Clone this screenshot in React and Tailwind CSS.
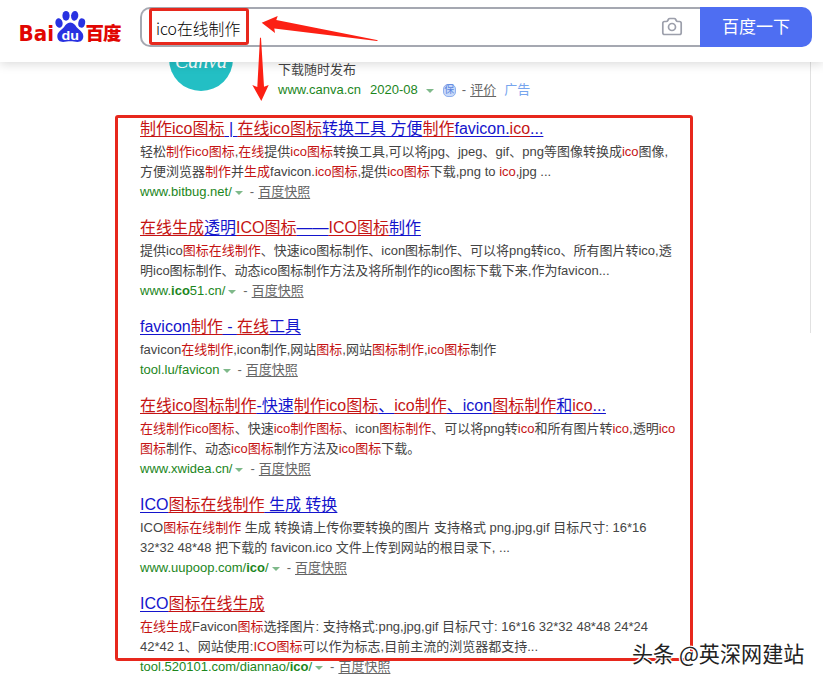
import React from "react";

// text inside [ ] is a matched keyword
const results = [
  {
    title: "[制作ico图标] | [在线ico图标]转换工具 方便[制作]favicon.[ico]...",
    lines: [
      "轻松[制作ico图标],[在线]提供[ico图标]转换工具,可以将jpg、jpeg、gif、png等图像转换成[ico]图像,",
      "方便浏览器[制作]并[生成]favicon.[ico图标],提供[ico图标]下载,png to [ico],jpg ...",
    ],
    url: "www.bitbug.net/",
  },
  {
    title: "[在线生成]透明[ICO图标]——[ICO图标]制作",
    lines: [
      "提供ico[图标在线制作]、快速ico图标制作、icon图标制作、可以将png转ico、所有图片转ico,透",
      "明ico图标制作、动态ico图标制作方法及将所制作的ico图标下载下来,作为favicon...",
    ],
    url: "www.[ico]51.cn/",
  },
  {
    title: "favicon[制作] - [在线]工具",
    lines: ["favicon[在线制作],icon制作,网站[图标],网站[图标制作],[ico图标]制作"],
    url: "tool.lu/favicon",
  },
  {
    title: "[在线ico图标制作]-快速[制作ico图标]、[ico制作]、icon[图标制作]和[ico]...",
    lines: [
      "[在线制作ico图标]、快速[ico制作图标]、icon[图标制作]、可以将png转[ico]和所有图片转[ico],透明[ico]",
      "[图标]制作、动态[ico图标]制作方法及[ico图标]下载。",
    ],
    url: "www.xwidea.cn/",
  },
  {
    title: "ICO[图标在线制作] 生成 转换",
    lines: [
      "ICO[图标在线制作] 生成 转换请上传你要转换的图片 支持格式 png,jpg,gif 目标尺寸: 16*16",
      "32*32 48*48 把下载的 favicon.ico 文件上传到网站的根目录下, ...",
    ],
    url: "www.uupoop.com/[ico]/",
  },
  {
    title: "ICO[图标在线生成]",
    lines: [
      "[在线生成]Favicon[图标]选择图片: 支持格式:png,jpg,gif 目标尺寸: 16*16 32*32 48*48 24*24",
      "42*42 1、网站使用:[ICO图标]可以作为标志,目前主流的浏览器都支持...",
    ],
    url: "tool.520101.com/diannao/[ico]/",
  },
];

function Marked({ text, className }) {
  return text.split(/[[\]]/).map((part, i) =>
    i % 2 ? (
      <em key={i} className={className}>
        {part}
      </em>
    ) : (
      <span key={i}>{part}</span>
    )
  );
}

function Caret() {
  return <span className="mt-px border-x-4 border-t-4 border-x-transparent border-t-[#7fb98a]" />;
}

function Result({ item }) {
  return (
    <div className="mb-[13px] whitespace-nowrap">
      <h3 className="h-[26px] text-base leading-[26px] text-[#1414cc]">
        <a className="underline decoration-1 underline-offset-2">
          <Marked text={item.title} className="text-[#c51414] not-italic underline decoration-1 underline-offset-2" />
        </a>
      </h3>
      {item.lines.map((line) => (
        <p key={line} className="h-5 leading-5 text-[#444]">
          <Marked text={line} className="text-[#c51414] not-italic" />
        </p>
      ))}
      <div className="flex h-5 items-center leading-5 text-[#666]">
        <span className="mr-[3px] text-[#1c861c]">
          <Marked text={item.url} className="font-bold not-italic" />
        </span>
        <Caret />
        <span className="mr-1 ml-[7px]">-</span>
        <a className="underline underline-offset-2">百度快照</a>
      </div>
    </div>
  );
}

function Logo() {
  return (
    <svg width="104" height="44" viewBox="0 0 104 44" className="mt-[10px] ml-[18px] shrink-0 overflow-visible">
      <g fill="#e10602">
        <text x="0.5" y="31" fontSize="22" fontWeight="bold" textLength="35.5" lengthAdjust="spacingAndGlyphs" fontFamily="DejaVu Sans, sans-serif">
          Bai
        </text>
        <text x="67.5" y="29.5" fontSize="18.5" textLength="36" fontWeight="900" fontFamily="Noto Sans CJK SC, sans-serif">
          百度
        </text>
      </g>
      <g fill="#2932e1">
        <ellipse cx="41" cy="13" rx="3.6" ry="4.8" transform="rotate(-12 41 13)" />
        <ellipse cx="48" cy="5.8" rx="3.6" ry="4.9" />
        <ellipse cx="56.7" cy="5.8" rx="3.6" ry="4.9" transform="rotate(8 56.7 5.8)" />
        <ellipse cx="63.7" cy="13" rx="3.4" ry="4.7" transform="rotate(12 63.7 13)" />
        <path d="M52.3 12.5c3.2 0 4.6 2.2 6.2 4.6 2.2 3 6.8 4.8 6.8 9.2 0 3.8-2.5 5.7-5.8 5.7-2.5 0-4.6-.7-7.2-.7s-4.7.7-7.2.7c-3.3 0-5.8-1.9-5.8-5.7 0-4.4 4.6-6.2 6.8-9.2 1.6-2.4 3-4.6 6.2-4.6z" />
      </g>
      <text x="43.5" y="29.5" fontSize="13" fontWeight="bold" fill="#fff" textLength="17.5" lengthAdjust="spacingAndGlyphs" fontFamily="Liberation Sans, sans-serif">
        du
      </text>
    </svg>
  );
}

function CameraIcon() {
  return (
    <svg width="22" height="20" viewBox="0 0 22 20" fill="none" stroke="#9c9fab" strokeWidth="1.7" strokeLinejoin="round">
      <path d="M3.5 4.5h1.7c.7 0 1.3-.4 1.6-1l.5-1c.3-.6.8-1 1.5-1h4.4c.7 0 1.2.4 1.5 1l.5 1c.3.6.9 1 1.6 1h1.7c1 0 1.7.7 1.7 1.7v9.6c0 1-.7 1.7-1.7 1.7h-15c-1 0-1.7-.7-1.7-1.7V6.2c0-1 .7-1.7 1.7-1.7z" />
      <circle cx="11" cy="10" r="3.5" />
    </svg>
  );
}

function Header() {
  return (
    <header className="relative z-10 flex h-[62px] bg-white shadow-[0_2px_10px_rgba(0,0,0,0.15)]">
      <Logo />
      <div className="mt-[7px] ml-[18px] flex h-10 w-[672px]">
        <div className="flex flex-1 items-center justify-between rounded-l-[10px] border-2 border-r-0 border-[#a5a8b1] pr-[17px] pl-3.5 font-['Noto_Sans_CJK_SC',sans-serif]">
          <span className="pt-[3px] text-[15.8px] font-light text-black">ico在线制作</span>
          <CameraIcon />
        </div>
        <button className="w-28 rounded-r-[10px] bg-[#4e6ef2] pt-px text-[17px] text-white">百度一下</button>
      </div>
    </header>
  );
}

function Annotations() {
  return (
    <div className="pointer-events-none absolute inset-0 z-20">
      <div className="absolute top-2 left-[149px] h-[37px] w-[100px] rounded-[3px] border-3 border-[#e7281d]" />
      <div className="absolute top-[115px] left-[115px] h-[546px] w-[578px] rounded-[3px] border-3 border-[#e7281d]" />
      <svg width="823" height="120" className="absolute top-0 left-0" fill="#fc2014">
        <path d="M261.7 22.7 L277.7 16 L276.3 20 L378 40.3 L377 41 L274.3 28.5 L275 33 Z" />
        <path d="M260 37.7 L261 37.7 L264 86.7 L268.7 85 L261.3 101 L252.3 85 L257.3 87 Z" />
      </svg>
      <div className="absolute top-[638px] left-[632px] font-['Noto_Sans_CJK_SC',sans-serif] text-[21.1px] leading-[30px] whitespace-nowrap text-[#222] [text-shadow:-1px_-1px_0_#fff,1px_-1px_0_#fff,-1px_1px_0_#fff,1px_1px_0_#fff]">
        头条 @英深网建站
      </div>
    </div>
  );
}

export default function App() {
  return (
    <div className="relative h-[683px] w-[823px] overflow-hidden bg-white font-['Liberation_Sans','Noto_Sans_CJK_SC',sans-serif] text-[13px] text-[#444]">
      <Header />
      <div className="flex h-[621px]">
        <main className="w-[670px] pl-[140px]">
          {/* ad, partly scrolled under the header */}
          <div className="-mt-[35px] flex h-[89px] whitespace-nowrap">
            <div className="ml-[29px] flex h-16 w-16 items-center justify-center rounded-full bg-[#23bfc4] pt-1 font-['Liberation_Serif',serif] text-xl text-white italic">
              Canva
            </div>
            <div className="mt-[33px] ml-[45px] leading-5">
              <p>下载随时发布</p>
              <div className="flex h-5 items-center text-[#1c861c]">
                <span className="mr-[9px]">www.canva.cn</span>
                <span className="mr-2">2020-08</span>
                <Caret />
                <span className="mr-1.5 ml-[9px] flex h-[13px] w-[13px] items-center justify-center rounded-[5px] border border-[#8fb0ee] bg-[#c9daf9] text-[10px] text-[#5b86e0]">
                  保
                </span>
                <span className="mr-1 text-[#666]">-</span>
                <a className="mr-2 text-[#666] underline underline-offset-2">评价</a>
                <span className="text-[#77a5ee]">广告</span>
              </div>
            </div>
          </div>
          {results.map((item) => (
            <Result key={item.title} item={item} />
          ))}
        </main>
        <div className="ml-[140px] h-[271px] border-l border-[#e1e1e1]" />
      </div>
      <Annotations />
    </div>
  );
}
